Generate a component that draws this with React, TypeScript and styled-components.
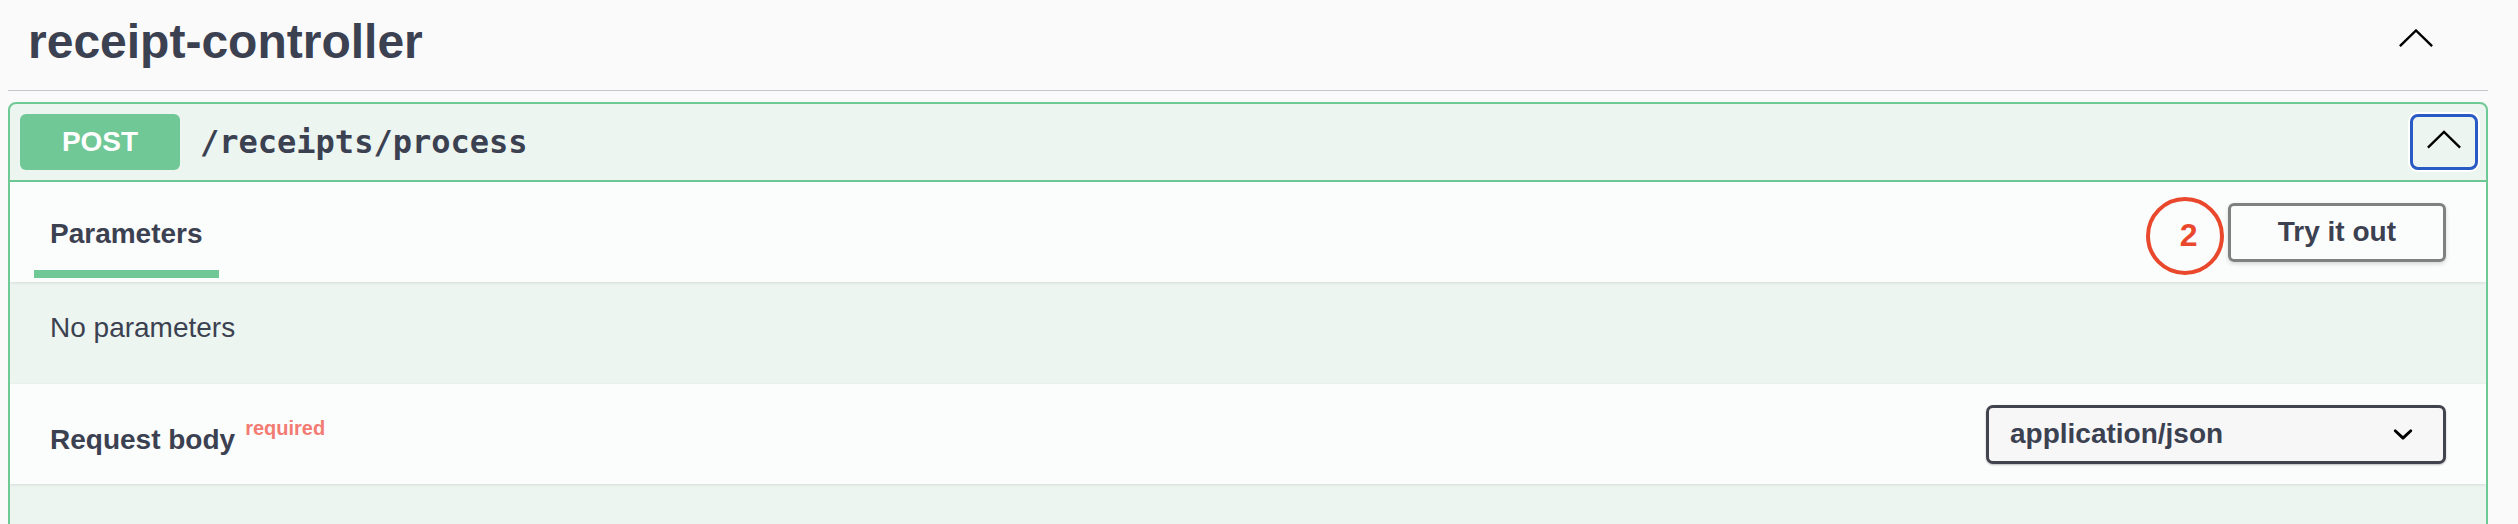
import React from "react";
import styled, { createGlobalStyle } from "styled-components";

const GlobalStyle = createGlobalStyle`
  html, body {
    margin: 0;
    padding: 0;
    background: #fafafa;
  }
  body {
    font-family: "Liberation Sans", Arial, Helvetica, sans-serif;
    color: #3b4151;
  }
  * { box-sizing: border-box; }
`;

const Page = styled.div`
  padding: 0 30px 0 8px;
  min-height: 524px;
`;

const TagHeader = styled.div`
  display: flex;
  align-items: flex-start;
  padding: 15px 0 21px 20px;
  border-bottom: 1px solid #c4c6cb;
`;

const TagTitle = styled.h3`
  flex: 1;
  margin: 0;
  font-size: 48px;
  line-height: 54px;
  font-weight: 700;
  color: #3b4151;
`;

const TagToggle = styled.div`
  margin: 14px 55px 0 0;
  display: flex;
`;

const Opblock = styled.div`
  margin-top: 11px;
  border: 2px solid #6fc995;
  border-radius: 8px;
  background: #ecf5f0;
  overflow: hidden;
`;

const Summary = styled.div`
  display: flex;
  align-items: center;
  padding: 10px;
  border-bottom: 2px solid #6fc995;
`;

const MethodBadge = styled.span`
  width: 160px;
  height: 56px;
  border-radius: 6px;
  background: #6fc895;
  color: #ffffff;
  font-size: 28px;
  font-weight: 700;
  display: flex;
  align-items: center;
  justify-content: center;
`;

const PathText = styled.span`
  flex: 1;
  padding: 0 20px;
  font-family: "DejaVu Sans Mono", "Liberation Mono", monospace;
  font-size: 32px;
  font-weight: 700;
  color: #3b4151;
`;

const CollapseButton = styled.div`
  width: 68px;
  height: 56px;
  margin-right: -2px;
  border: 3px solid #2a5bc5;
  border-radius: 8px;
  box-shadow: 0 0 0 2px #ffffff;
  display: flex;
  align-items: center;
  justify-content: center;
  padding-bottom: 6px;
`;

const SectionHeader = styled.div`
  position: relative;
  z-index: 1;
  display: flex;
  align-items: center;
  height: 100px;
  padding: 0 40px;
  background: rgba(255, 255, 255, 0.8);
  box-shadow: 0 1px 3px rgba(0, 0, 0, 0.1);
`;

const TabList = styled.div`
  flex: 1;
  align-self: flex-end;
  display: flex;
`;

const Tab = styled.div`
  margin: 0 0 4px -16px;
  padding: 0 16px 20px;
  border-bottom: 8px solid #6fc895;
  font-size: 28px;
  line-height: 32px;
  font-weight: 700;
  color: #3b4151;
`;

const StepMark = styled.div`
  width: 78px;
  height: 78px;
  margin: 7px 4px 0 0;
  border: 4px solid #e9482c;
  border-radius: 50%;
  display: flex;
  align-items: center;
  justify-content: center;
  padding-left: 8px;
  color: #e9482c;
  font-size: 32px;
  font-weight: 700;
`;

const TryButton = styled.button`
  height: 59px;
  padding: 0 47px;
  border: 3px solid #808080;
  border-radius: 6px;
  background: transparent;
  box-shadow: 0 2px 4px rgba(0, 0, 0, 0.15);
  font-family: "Liberation Sans", Arial, sans-serif;
  font-size: 28px;
  font-weight: 700;
  color: #3b4151;
  cursor: pointer;
`;

const Description = styled.div`
  padding: 30px 40px;
`;

const DescText = styled.p`
  margin: 0 0 10px;
  font-size: 28px;
  line-height: 32px;
  color: #3b4151;
`;

const SectionTitle = styled.h4`
  flex: 1;
  margin: 0;
  font-size: 28px;
  line-height: 32px;
  font-weight: 700;
  color: #3b4151;
`;

const Required = styled.span`
  padding: 0 10px;
  font-size: 20px;
  font-weight: 700;
  color: #f27b73;
  vertical-align: 14px;
`;

const SelectBox = styled.div`
  width: 460px;
  height: 59px;
  display: flex;
  align-items: center;
  justify-content: space-between;
  padding: 0 20px 0 21px;
  border: 3px solid #41444e;
  border-radius: 7px;
  background: #f7f7f7;
  box-shadow: 0 1px 2px rgba(0, 0, 0, 0.25);
  font-size: 28px;
  font-weight: 700;
  color: #3b4151;
`;

const Filler = styled.div`
  min-height: 60px;
`;

const ChevronUp: React.FC<{ w: number; h: number }> = ({ w, h }) => (
  <svg width={w} height={h} viewBox="0 0 34 18" fill="none">
    <polyline points="0.9,17.2 17,1.5 33.1,17.2" stroke="#000" strokeWidth="2.4" />
  </svg>
);

const SelectArrow = () => (
  <svg width="40" height="40" viewBox="0 0 20 20">
    <path
      fill="#000"
      d="M13.418 7.859a.695.695 0 01.978 0 .68.68 0 010 .969l-3.908 3.83a.697.697 0 01-.979 0l-3.908-3.830a.68.68 0 010-.969.695.695 0 01.978 0L10 11l3.418-3.141z"
    />
  </svg>
);

export default function App() {
  return (
    <>
      <GlobalStyle />
      <Page>
        <TagHeader>
          <TagTitle>receipt-controller</TagTitle>
          <TagToggle>
            <ChevronUp w={34} h={18} />
          </TagToggle>
        </TagHeader>
        <Opblock>
          <Summary>
            <MethodBadge>POST</MethodBadge>
            <PathText>/receipts/process</PathText>
            <CollapseButton>
              <ChevronUp w={34} h={19} />
            </CollapseButton>
          </Summary>
          <SectionHeader>
            <TabList>
              <Tab>Parameters</Tab>
            </TabList>
            <StepMark>2</StepMark>
            <TryButton>Try it out</TryButton>
          </SectionHeader>
          <Description>
            <DescText>No parameters</DescText>
          </Description>
          <SectionHeader>
            <SectionTitle>
              Request body
              <Required>required</Required>
            </SectionTitle>
            <SelectBox>
              <span>application/json</span>
              <SelectArrow />
            </SelectBox>
          </SectionHeader>
          <Filler />
        </Opblock>
      </Page>
    </>
  );
}
